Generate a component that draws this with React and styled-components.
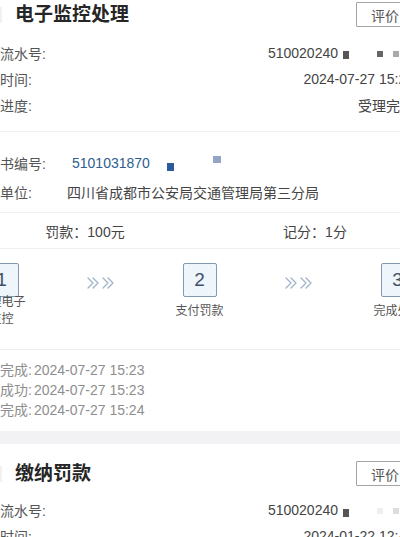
import styled, { createGlobalStyle } from "styled-components";

const GlobalStyle = createGlobalStyle`
  body {
    margin: 0;
    background: #fff;
    overflow: hidden;
    font-family: "Liberation Sans", "Noto Sans CJK SC", sans-serif;
  }
`;

const infoTop = [
  { label: "交易流水号:", value: "510020240", masked: true },
  { label: "处理时间:", value: "2024-07-27 15:23" },
  { label: "处理进度:", value: "受理完成" },
];

const times = [
  { label: "受理完成:", value: "2024-07-27 15:23" },
  { label: "支付成功:", value: "2024-07-27 15:23" },
  { label: "处理完成:", value: "2024-07-27 15:24" },
];

function DoubleChevron() {
  return (
    <svg width="28" height="12" viewBox="0 0 28 12" fill="none">
      <path
        d="M1 1l5 5-5 5M6 1l5 5-5 5M16 1l5 5-5 5M21 1l5 5-5 5"
        stroke="#9fb3c8"
        strokeWidth="1.3"
        strokeLinecap="round"
        strokeLinejoin="round"
      />
    </svg>
  );
}

function CardHeader({ title }) {
  return (
    <Header>
      <Bar />
      <Title>{title}</Title>
      <RateButton>评价</RateButton>
    </Header>
  );
}

function SerialValue({ dark }) {
  return (
    <Value>
      510020240
      <Mask $w={6} $h={8} $c="#555" $ml={5} $dy={dark ? 3 : 2} />
      <Mask $w={6} $h={6} $c={dark ? "#eee" : "#666"} $ml={28} $dy={1} />
      <Mask $w={6} $h={6} $c={dark ? "#ddd" : "#aaa"} $ml={10} $dy={1} />
      <Mask $w={15} $h={1} $c="transparent" $ml={0} />
    </Value>
  );
}

export default function App() {
  return (
    <Page>
      <GlobalStyle />
      <Card $top={-15}>
        <CardHeader title="电子监控处理" />
        <InfoList>
          {infoTop.map((row) => (
            <InfoRow key={row.label}>
              <Label>{row.label}</Label>
              {row.masked ? <SerialValue /> : <Value>{row.value}</Value>}
            </InfoRow>
          ))}
        </InfoList>
        <Divider />
        <DocList>
          <DocRow>
            <Label>决定书编号:</Label>
            <DocNo>
              5101031870
              <Mask $w={7} $h={8} $c="#2d5a9b" $ml={17} $dy={4} />
              <Mask $w={8} $h={7} $c="#93a5c4" $ml={39} $dy={-3} />
            </DocNo>
          </DocRow>
          <DocRow>
            <Label>处罚单位:</Label>
            <Value>四川省成都市公安局交通管理局第三分局</Value>
          </DocRow>
        </DocList>
        <Divider />
        <FineRow>
          <FineCell>罚款：100元</FineCell>
          <FineCell>记分：1分</FineCell>
        </FineRow>
        <Divider />
        <Steps>
          <Step>
            <StepBox>1</StepBox>
            <StepLabel>
              处理电子
              <br />
              监控
            </StepLabel>
          </Step>
          <Arrows>
            <DoubleChevron />
          </Arrows>
          <Step>
            <StepBox>2</StepBox>
            <StepLabel>支付罚款</StepLabel>
          </Step>
          <Arrows>
            <DoubleChevron />
          </Arrows>
          <Step>
            <StepBox>3</StepBox>
            <StepLabel>完成处理</StepLabel>
          </Step>
        </Steps>
        <Divider />
        <TimeList>
          {times.map((t) => (
            <TimeRow key={t.label}>
              {t.label}
              <TimeValue>{t.value}</TimeValue>
            </TimeRow>
          ))}
        </TimeList>
      </Card>
      <Band />
      <Card>
        <CardHeader title="缴纳罚款" />
        <InfoList $top={11}>
          <InfoRow>
            <Label>交易流水号:</Label>
            <SerialValue dark />
          </InfoRow>
          <InfoRow>
            <Label>处理时间:</Label>
            <Value>2024-01-22 12:43</Value>
          </InfoRow>
        </InfoList>
      </Card>
    </Page>
  );
}

const Page = styled.div`
  width: 400px;
  height: 537px;
  overflow: hidden;
  background: #fff;
`;

const Card = styled.section`
  margin: ${(p) => p.$top || 0}px -30px 0;
  padding: 0 16px 0 2px;
  background: #fff;
`;

const Header = styled.header`
  display: flex;
  align-items: center;
  padding-top: 17px;
`;

const Bar = styled.span`
  width: 3px;
  height: 16px;
  margin-left: 27px;
  background: #f1f1f1;
`;

const Title = styled.h2`
  flex: 1;
  margin: 0 0 0 13px;
  font-size: 19px;
  font-weight: 700;
  line-height: 25px;
  color: #262626;
`;

const RateButton = styled.button`
  width: 58px;
  height: 25px;
  padding: 0;
  border: 1px solid #a3a3a3;
  border-radius: 1px;
  background: #fff;
  color: #555;
  font-family: inherit;
  font-size: 14px;
`;

const InfoList = styled.div`
  padding: ${(p) => p.$top ?? 13}px 0 13px;
`;

const InfoRow = styled.div`
  display: flex;
  justify-content: space-between;
  align-items: center;
  height: 26px;
  font-size: 14px;
`;

const Label = styled.span`
  color: #555;
  white-space: nowrap;
`;

const Value = styled.span`
  display: flex;
  align-items: center;
  color: #444;
  white-space: nowrap;
`;

const Mask = styled.i`
  display: inline-block;
  flex-shrink: 0;
  width: ${(p) => p.$w}px;
  height: ${(p) => p.$h}px;
  margin-left: ${(p) => p.$ml}px;
  background: ${(p) => p.$c};
  transform: translateY(${(p) => p.$dy || 0}px);
`;

const Divider = styled.div`
  height: 1px;
  margin: 0 -16px 0 -2px;
  background: #f0f0f0;
`;

const DocList = styled.div`
  padding: 16px 0 6px;
`;

const DocRow = styled.div`
  display: grid;
  grid-template-columns: 95px 1fr;
  align-items: center;
  height: 29px;
  font-size: 14px;
`;

const DocNo = styled.span`
  display: flex;
  align-items: center;
  margin-left: 5px;
  color: #2f5d8f;
`;

const FineRow = styled.div`
  display: flex;
  align-items: center;
  height: 35px;
  margin: 0 -16px 0 -2px;
`;

const FineCell = styled.span`
  flex: 1;
  text-align: center;
  font-size: 14px;
  color: #444;
`;

const Steps = styled.div`
  display: grid;
  grid-template-columns: repeat(5, 99px);
  margin: 0 -17px 0 -20px;
  padding: 14px 0 24px;
`;

const Step = styled.div`
  display: flex;
  flex-direction: column;
  align-items: center;
`;

const StepBox = styled.div`
  display: flex;
  align-items: center;
  justify-content: center;
  box-sizing: border-box;
  width: 34px;
  height: 34px;
  border: 1.5px solid #8499ad;
  border-radius: 2px;
  background: #eef5fb;
  color: #3d5268;
  font-size: 19px;
`;

const StepLabel = styled.div`
  display: flex;
  align-items: center;
  height: 28px;
  text-align: center;
  font-size: 12px;
  line-height: 17px;
  color: #555;
  white-space: nowrap;
`;

const Arrows = styled.div`
  display: flex;
  align-items: center;
  justify-content: center;
  height: 34px;
  padding-top: 6px;
  box-sizing: border-box;
`;

const TimeList = styled.div`
  padding: 10px 0 11px;
`;

const TimeRow = styled.div`
  font-size: 14px;
  line-height: 20px;
  color: #8e8e8e;
  white-space: nowrap;
`;

const TimeValue = styled.span`
  margin-left: 2px;
`;

const Band = styled.div`
  height: 13px;
  background: #f2f2f4;
`;
